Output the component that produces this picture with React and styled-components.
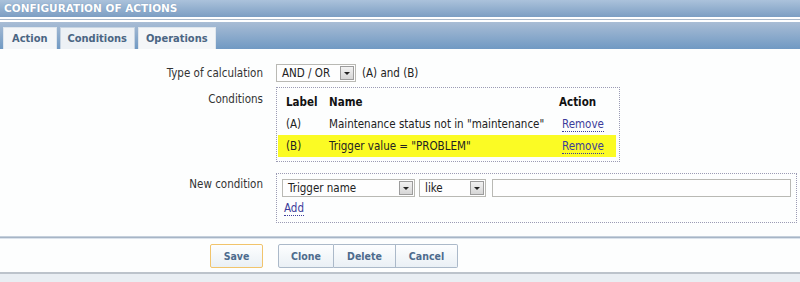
import React from "react";
import styled, { createGlobalStyle } from "styled-components";

const Global = createGlobalStyle`
  html, body { margin: 0; padding: 0; background: #fdfefe; }
  body {
    font-family: "DejaVu Sans Condensed", "DejaVu Sans", sans-serif;
    font-size: 11.5px;
    color: #222;
  }
`;

const Page = styled.div`
  width: 800px;
  height: 282px;
  overflow: hidden;
  background: #fdfefe;
`;

const TitleBar = styled.div`
  height: 17px;
  background: linear-gradient(#abc2db, #7c9ec3);
  color: #fff;
  font-family: "DejaVu Sans", sans-serif;
  font-weight: bold;
  font-size: 10.5px;
  line-height: 17px;
  padding-left: 4px;
  text-shadow: 0 0 1px #6c8cb0;
  border-bottom: 2px solid #fff;
`;

const Rule = styled.div`
  height: 1px;
  background: #a9b8c9;
  border-bottom: 2px solid #fff;
`;

const TabBar = styled.div`
  height: 27px;
  background: linear-gradient(#a9bdd5, #7099c3);
  display: flex;
  align-items: flex-end;
  gap: 3px;
  padding-left: 3px;
`;

const Tab = styled.div`
  height: 22px;
  box-sizing: border-box;
  padding: 0 ${p => p.$pad}px;
  display: flex;
  align-items: center;
  background: ${p => (p.$active ? "#edf1f5" : "#f4f6f8")};
  border: 1px solid ${p => (p.$active ? "#c7d4e2" : "#dfe6ed")};
  border-bottom: none;
  color: #4a6583;
  font-weight: bold;
  font-size: 11px;
`;

const Form = styled.div`
  display: grid;
  grid-template-columns: 263px 1fr;
  column-gap: 13px;
  padding-top: 15px;
`;

const Label = styled.div`
  text-align: right;
  color: #333;
  padding-top: ${p => p.$top}px;
`;

const Field = styled.div`
  display: flex;
  align-items: ${p => (p.$top ? "flex-start" : "center")};
  gap: 6px;
  margin-bottom: ${p => p.$mb || 0}px;
`;

const SelectBox = styled.div`
  width: ${p => p.$w}px;
  height: 18px;
  box-sizing: border-box;
  border: 1px solid #b9b9b4;
  background: #fefefe;
  display: flex;
  align-items: center;
  justify-content: space-between;
  padding: 0 1px 0 5px;
  color: #222;
`;

const Arrow = styled.div`
  width: 14px;
  height: 14px;
  box-sizing: border-box;
  border: 1px solid #9c9c9c;
  background: linear-gradient(#f2f2f2, #d6d6d6);
  display: flex;
  align-items: center;
  justify-content: center;
  &::after {
    content: "";
    border-left: 3px solid transparent;
    border-right: 3px solid transparent;
    border-top: 3px solid #222;
    margin-top: 1px;
  }
`;

const Dotted = styled.div`
  box-sizing: border-box;
  width: ${p => p.$w}px;
  border: 1px dotted #9b9bb4;
  padding: ${p => p.$pad};
`;

const Table = styled.table`
  border-collapse: collapse;
  width: 100%;
  th {
    text-align: left;
    font-weight: bold;
    font-size: 11.5px;
    color: #111;
    height: 22px;
    padding: 0;
  }
  td {
    height: 22px;
    padding: 0;
    color: #222;
  }
`;

const Row = styled.tr`
  background: ${p => (p.$hl ? "#fbfb24" : "transparent")};
`;

const LinkText = styled.span`
  color: #3c3c9a;
  border-bottom: 1px dotted #3c3c9a;
`;

const Input = styled.div`
  flex: 1;
  height: 18px;
  box-sizing: border-box;
  border: 1px solid #b9b9b4;
  background: #fefefe;
`;

const Selects = styled.div`
  display: flex;
  gap: 4px;
`;

const AddRow = styled.div`
  height: 21px;
  padding: 4px 0 0 2px;
  box-sizing: border-box;
`;

const Footer = styled.div`
  margin-top: 13px;
  border-top: 1px solid #c5d0dc;
  height: 1px;
  background: #a7b5c6;
  border-bottom: 1px solid #dbe3ec;
`;

const ButtonBar = styled.div`
  display: grid;
  grid-template-columns: 263px 1fr;
  column-gap: 15px;
  padding: 5px 0 4px;
  border-bottom: 2px solid #bcc3cb;
`;

const Btn = styled.div`
  height: 24px;
  box-sizing: border-box;
  width: ${p => p.$w}px;
  display: flex;
  align-items: center;
  justify-content: center;
  font-weight: bold;
  font-size: 10.5px;
  color: #4d6b8d;
  background: linear-gradient(#fdfeff, #eaf0f5);
  border: 1px solid ${p => (p.$save ? "#f1c46c" : "#abb9c9")};
  border-radius: 2px;
`;

const SaveCell = styled.div`
  display: flex;
  justify-content: flex-end;
`;

const Group = styled.div`
  display: flex;
  ${Btn} { border-radius: 0; }
  ${Btn} + ${Btn} { border-left: none; }
  ${Btn}:first-child { border-radius: 2px 0 0 2px; }
  ${Btn}:last-child { border-radius: 0 2px 2px 0; }
`;

const Bottom = styled.div`
  height: 20px;
  background: #e9eef3;
`;

export default function App() {
  return (
    <Page>
      <Global />
      <TitleBar>CONFIGURATION OF ACTIONS</TitleBar>
      <Rule />
      <TabBar>
        <Tab $pad={8}>Action</Tab>
        <Tab $pad={7} $active>Conditions</Tab>
        <Tab $pad={7}>Operations</Tab>
      </TabBar>
      <Form>
        <Label $top={2}>Type of calculation</Label>
        <Field $mb={5}>
          <SelectBox $w={80}>AND / OR<Arrow /></SelectBox>
          <span>(A) and (B)</span>
        </Field>

        <Label $top={5}>Conditions</Label>
        <Field $top $mb={11}>
          <Dotted $w={344} $pad="3px 3px 4px 1px">
            <Table>
              <colgroup>
                <col style={{ width: 51 }} />
                <col />
                <col style={{ width: 57 }} />
              </colgroup>
              <thead>
                <tr>
                  <th style={{ paddingLeft: 8 }}>Label</th>
                  <th>Name</th>
                  <th>Action</th>
                </tr>
              </thead>
              <tbody>
                <tr>
                  <td style={{ paddingLeft: 8 }}>(A)</td>
                  <td>Maintenance status not in "maintenance"</td>
                  <td style={{ paddingLeft: 3 }}><LinkText>Remove</LinkText></td>
                </tr>
                <Row $hl>
                  <td style={{ paddingLeft: 8 }}>(B)</td>
                  <td>Trigger value = "PROBLEM"</td>
                  <td style={{ paddingLeft: 3 }}><LinkText>Remove</LinkText></td>
                </Row>
              </tbody>
            </Table>
          </Dotted>
        </Field>

        <Label $top={4}>New condition</Label>
        <Field $top>
          <Dotted $w={521} $pad="5px 5px 4px 5px">
            <Field>
              <Selects>
                <SelectBox $w={133}>Trigger name<Arrow /></SelectBox>
                <SelectBox $w={67}>like<Arrow /></SelectBox>
              </Selects>
              <Input />
            </Field>
            <AddRow><LinkText>Add</LinkText></AddRow>
          </Dotted>
        </Field>
      </Form>
      <Footer />
      <ButtonBar>
        <SaveCell><Btn $w={53} $save>Save</Btn></SaveCell>
        <Group>
          <Btn $w={56}>Clone</Btn>
          <Btn $w={62}>Delete</Btn>
          <Btn $w={62}>Cancel</Btn>
        </Group>
      </ButtonBar>
      <Bottom />
    </Page>
  );
}
